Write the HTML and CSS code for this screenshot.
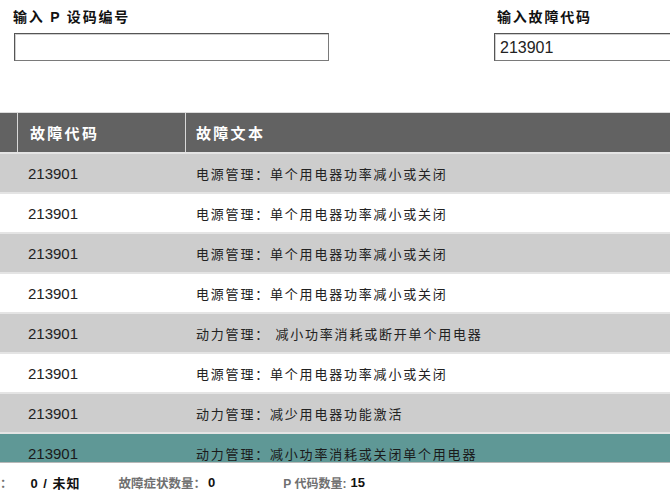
FILE: index.html
```html
<!DOCTYPE html>
<html lang="zh">
<head>
<meta charset="utf-8">
<link rel="stylesheet" href="styles.css">
</head>
<body>
<div class="page">
  <div class="filters">
    <div class="field field-p">
      <div class="label">输入 P 设码编号</div>
      <div class="input"></div>
    </div>
    <div class="field field-code">
      <div class="label">输入故障代码</div>
      <div class="input">213901</div>
    </div>
  </div>

  <div class="table">
    <div class="row head">
      <div class="cell c0"></div>
      <div class="cell c1">故障代码</div>
      <div class="cell c2">故障文本</div>
    </div>
    <div class="row gray"><div class="cell c0"></div><div class="cell c1">213901</div><div class="cell c2">电源管理：单个用电器功率减小或关闭</div></div>
    <div class="row white"><div class="cell c0"></div><div class="cell c1">213901</div><div class="cell c2">电源管理：单个用电器功率减小或关闭</div></div>
    <div class="row gray"><div class="cell c0"></div><div class="cell c1">213901</div><div class="cell c2">电源管理：单个用电器功率减小或关闭</div></div>
    <div class="row white"><div class="cell c0"></div><div class="cell c1">213901</div><div class="cell c2">电源管理：单个用电器功率减小或关闭</div></div>
    <div class="row gray"><div class="cell c0"></div><div class="cell c1">213901</div><div class="cell c2">动力管理： 减小功率消耗或断开单个用电器</div></div>
    <div class="row white"><div class="cell c0"></div><div class="cell c1">213901</div><div class="cell c2">电源管理：单个用电器功率减小或关闭</div></div>
    <div class="row gray"><div class="cell c0"></div><div class="cell c1">213901</div><div class="cell c2">动力管理：减少用电器功能激活</div></div>
    <div class="row sel"><div class="cell c0"></div><div class="cell c1">213901</div><div class="cell c2">动力管理：减小功率消耗或关闭单个用电器</div></div>
  </div>

  <div class="footer">
    <span class="lbl first">：</span>
    <span class="val v1">0 / 未知</span>
    <span class="lbl l2">故障症状数量：</span>
    <span class="val v2">0</span>
    <span class="lbl l3">P 代码数量:</span>
    <span class="val v3">15</span>
  </div>
</div>
</body>
</html>
```

FILE: styles.css
```css
html, body {
  margin: 0;
  padding: 0;
  background: #ffffff;
  overflow: hidden;
}
body {
  width: 670px;
  height: 501px;
  font-family: "Liberation Sans", "Noto Sans CJK SC", sans-serif;
  color: #111;
}
.page {
  width: 670px;
  overflow: hidden;
}
.filters {
  display: flex;
  padding: 8px 0 0 13px;
  gap: 164px;
  height: 54px;
}
.field { flex-shrink: 0; }
.field-p { width: 316px; }
.field-code { width: 300px; }
.label {
  font-size: 14px;
  font-weight: bold;
  letter-spacing: 1.8px;
  height: 18px;
  line-height: 18px;
  color: #111;
}
.field-code .label { padding-left: 4px; }
.input {
  margin-top: 7px;
  height: 26px;
  border: 1px solid #7a7a7a;
  border-top-color: #555;
  border-left-color: #555;
  box-shadow: inset 1px 1px 0 #cfcfcf;
  font-size: 16px;
  line-height: 27px;
  padding-left: 5px;
  color: #222;
  margin-left: 1px;
}
.table {
  margin-top: 50px;
  height: 349px;
  overflow: hidden;
  border-bottom: 1px solid #b8b8b8;
  border-top: 1px solid #dcdcdc;
}
.row {
  display: grid;
  grid-template-columns: 17px 168px 500px;
  height: 38px;
  border-bottom: 2px solid #e4e4e4;
  align-items: center;
  font-size: 13px;
  color: #222;
}
.row .cell { height: 100%; display: flex; align-items: center; }
.row .c1 { padding-left: 11px; font-size: 15px; }
.row .c2 { padding-left: 11px; letter-spacing: 1.8px; }
.head { background: #626262; color: #fff; font-weight: bold; height: 39px; }
.head .c1, .head .c2 { border-left: 1px solid #d8d8d8; font-size: 15px; letter-spacing: 2.3px; }
.head .c1 { padding-left: 12px; }
.head .c2 { padding-left: 10px; }
.gray { background: #cdcdcd; }
.white { background: #ffffff; }
.sel { background: #5f9896; color: #1a1a1a; }
.footer {
  display: flex;
  align-items: center;
  height: 38px;
  font-weight: bold;
}
.lbl { color: #707070; font-size: 12.5px; }
.val { color: #111; font-size: 13px; }
.v1 { margin-left: 18px; letter-spacing: 1px; }
.l2 { margin-left: 38px; }
.v2 { margin-left: 2px; }
.l3 { margin-left: 68px; font-size: 12px; }
.v3 { margin-left: 4px; }
```
